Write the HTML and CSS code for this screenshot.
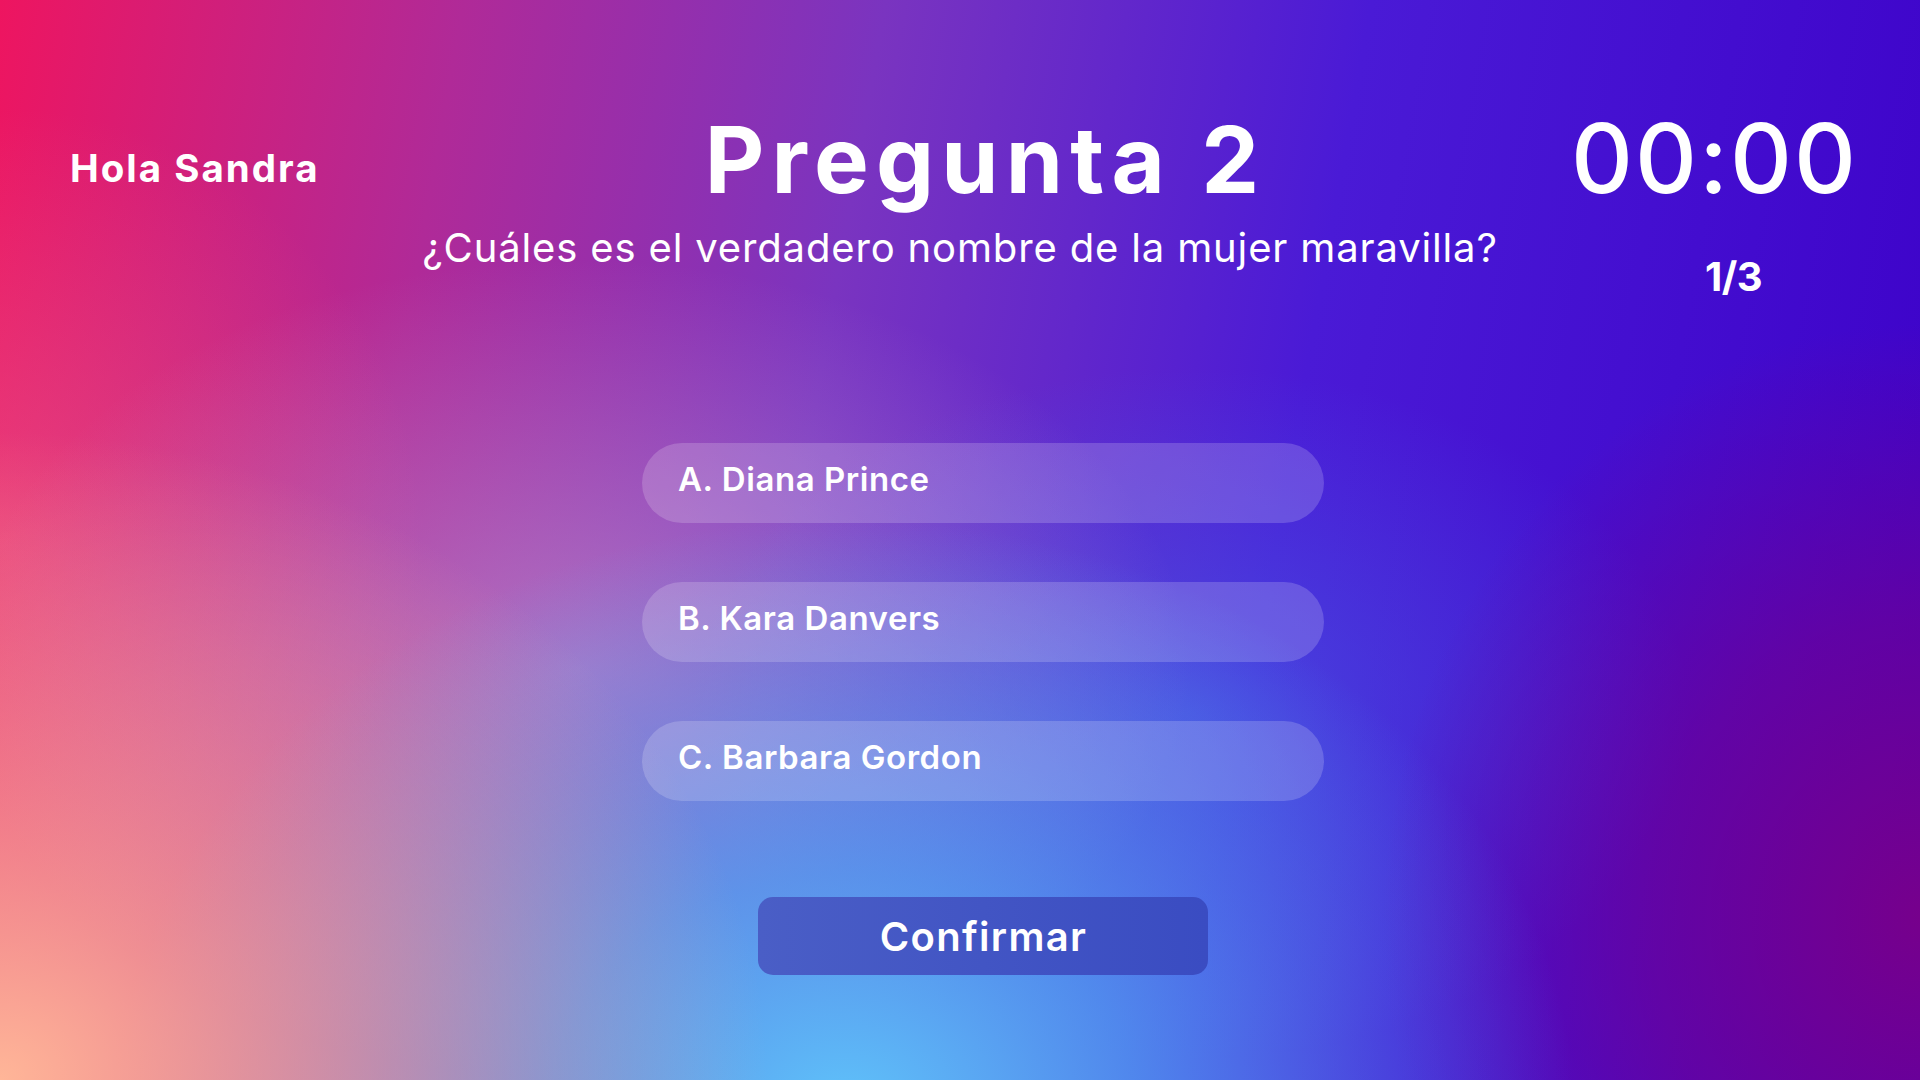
FILE: index.html
```html
<!DOCTYPE html>
<html lang="es">
<head>
<meta charset="utf-8">
<title>Pregunta 2</title>
<link rel="stylesheet" href="styles.css">
</head>
<body>
<div class="page">
  <header class="header">
    <div class="greeting">Hola Sandra</div>
    <div class="center">
      <h1 class="title">Pregunta 2</h1>
      <p class="question">¿Cuáles es el verdadero nombre de la mujer maravilla?</p>
    </div>
    <div class="right">
      <div class="right-inner">
        <div class="timer">00:00</div>
        <div class="counter">1/3</div>
      </div>
    </div>
  </header>
  <main class="main">
    <ul class="options">
      <li class="option">A. Diana Prince</li>
      <li class="option">B. Kara Danvers</li>
      <li class="option">C. Barbara Gordon</li>
    </ul>
    <button class="confirm">Confirmar</button>
  </main>
</div>
</body>
</html>
```

FILE: styles.css
```css
* { box-sizing: border-box; }
html, body {
  margin: 0;
  padding: 0;
  width: 1920px;
  height: 1080px;
  overflow: hidden;
}
body {
  font-family: "Inter", "Noto Sans", sans-serif;
  color: #ffffff;
  background:
    radial-gradient(ellipse 40% 60% at 0% 100%, rgba(255,182,152,1) 0%, rgba(255,182,152,0.55) 45%, rgba(255,182,152,0) 100%),
    radial-gradient(ellipse 38% 55% at 44% 103%, rgba(95,195,250,1) 0%, rgba(80,170,245,0.75) 40%, rgba(70,150,240,0) 100%),
    radial-gradient(ellipse 28% 55% at 100% 85%, rgba(118,0,140,1) 0%, rgba(118,0,140,0.6) 50%, rgba(118,0,140,0) 100%),
    radial-gradient(ellipse 32% 38% at 30% 62%, rgba(195,170,215,0.55) 0%, rgba(195,170,215,0) 100%),
    radial-gradient(ellipse 26% 32% at 62% 66%, rgba(70,100,230,0.6) 0%, rgba(70,100,230,0) 100%),
    radial-gradient(ellipse 22% 40% at 0% 50%, rgba(240,100,140,0.5) 0%, rgba(240,100,140,0) 100%),
    linear-gradient(100deg, #ee1560 0%, #b02a98 22%, #7a34c0 42%, #4a1ad6 65%, #3c00c8 100%);
}
.page {
  width: 1920px;
  height: 1080px;
}
.header {
  display: grid;
  grid-template-columns: 1fr auto 1fr;
  padding: 110px 62px 0 70px;
}
.greeting {
  margin-top: 39px;
  font-size: 38.5px;
  line-height: 38.5px;
  font-weight: 700;
  letter-spacing: 2px;
}
.center {
  text-align: center;
}
.title {
  margin: 4px 0 0;
  padding-left: 43px;
  font-size: 92px;
  line-height: 92px;
  font-weight: 700;
  letter-spacing: 7.2px;
}
.question {
  margin: 22px 0 0;
  padding-right: 8px;
  font-size: 40px;
  line-height: 40px;
  font-weight: 400;
  letter-spacing: 0.85px;
}
.right {
  display: flex;
  justify-content: flex-end;
}
.right-inner {
  text-align: center;
}
.timer {
  font-size: 96px;
  line-height: 96px;
  font-weight: 500;
  letter-spacing: 2px;
}
.counter {
  margin-top: 51px;
  padding-left: 38px;
  font-size: 40px;
  line-height: 40px;
  font-weight: 700;
  letter-spacing: -0.5px;
}
.main {
  display: flex;
  flex-direction: column;
  align-items: center;
  padding-left: 46px;
  margin-top: 146px;
}
.options {
  list-style: none;
  margin: 0;
  padding: 0;
  display: flex;
  flex-direction: column;
  gap: 59px;
}
.option {
  width: 682px;
  height: 80px;
  border-radius: 40px;
  background: rgba(255,255,255,0.18);
  display: flex;
  align-items: center;
  padding: 0 0 8px 36px;
  font-size: 33px;
  font-weight: 600;
  letter-spacing: 0.55px;
}
.confirm {
  margin-top: 96px;
  width: 450px;
  height: 78px;
  border: none;
  border-radius: 15px;
  background: linear-gradient(90deg, #4a5ec6 0%, #3a4cc2 100%);
  color: #ffffff;
  font-family: "Inter", "Noto Sans", sans-serif;
  font-size: 40px;
  font-weight: 600;
  letter-spacing: 1.3px;
  padding: 0 0 0 1px;
  cursor: pointer;
}
```
